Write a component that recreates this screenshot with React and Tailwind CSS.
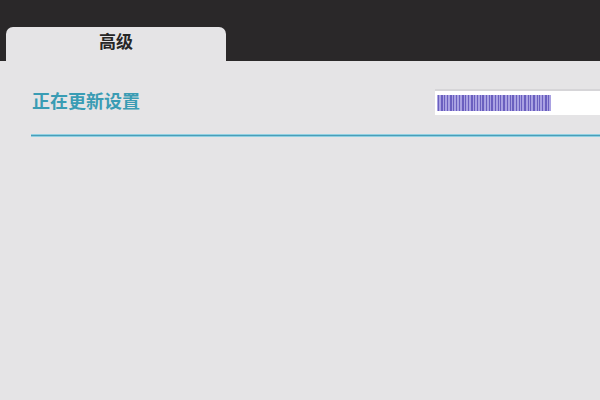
import React from "react";

// vertical stripes for the busy bar
const stripes = [1, 2, 1, 1, 2, 1, 1, 1, 2, 1, 1, 2, 1, 1, 1, 2, 1, 1, 2, 1, 1, 1, 2, 1, 1, 2, 1, 1, 1, 2, 1, 1, 2, 1, 1, 1, 2, 1];

export default function App() {
    return (
        <div
            className="w-[600px] h-[400px] bg-[#e5e4e6] flex flex-col overflow-hidden"
            style={{ fontFamily: '"Liberation Sans", "Noto Sans CJK SC", sans-serif' }}
        >
            {/* TOP BAR WITH TAB */}

            <div className="h-[61px] bg-[#2a2829] flex items-end pl-[6px] shrink-0">
                <div className="w-[220px] h-[34px] bg-[#e5e4e6] rounded-t-[7px] flex justify-center pt-[5px]">
                    <span className="text-[17px] font-bold text-[#262626] leading-[22px]">
                        高级
                    </span>
                </div>
            </div>

            {/* STATUS ROW */}

            <div className="flex items-center justify-between pl-[32px] mt-[28px] h-[26px]">
                <span className="text-[18px] font-bold text-[#3a9cb4] leading-[24px]">
                    正在更新设置
                </span>

                <div className="w-[165px] h-[26px] bg-white border-t-2 border-[#d6d5d8] flex items-center pl-[2px]">
                    <div className="w-[114px] h-[16px] bg-[#a9a1e2] flex items-stretch justify-between px-[1px] overflow-hidden">
                        {stripes.map((w, i) => (
                            <div
                                key={i}
                                className="bg-[#6a5fbf] shrink-0"
                                style={{ width: w }}
                            />
                        ))}
                    </div>
                </div>
            </div>

            {/* DIVIDER */}

            <div className="ml-[31px] mt-[19px] h-[3px] bg-[#4b9db8] border-y border-[#8fd0e2]" />
        </div>
    );
}
